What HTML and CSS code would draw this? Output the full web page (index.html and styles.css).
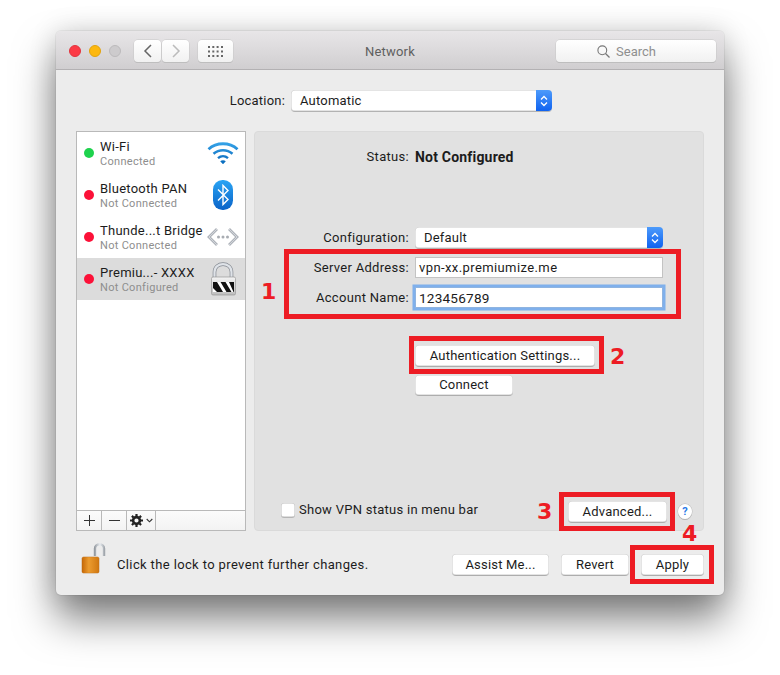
FILE: index.html
```html
<!DOCTYPE html>
<html lang="en">
<head>
<meta charset="utf-8">
<title>Network</title>
<link rel="stylesheet" href="styles.css">
</head>
<body>
<svg class="defs" width="0" height="0" aria-hidden="true">
  <defs>
    <linearGradient id="wifiGrad" gradientUnits="userSpaceOnUse" x1="0" y1="0" x2="0" y2="24"><stop offset="0" stop-color="#38a8ec"/><stop offset="1" stop-color="#0660b4"/></linearGradient>
    <linearGradient id="btGrad" x1="0" y1="0" x2="0" y2="1"><stop offset="0" stop-color="#2aa4f4"/><stop offset="1" stop-color="#0a63c8"/></linearGradient>
    <linearGradient id="silver" gradientUnits="userSpaceOnUse" x1="14" y1="0" x2="26" y2="0"><stop offset="0" stop-color="#8d939a"/><stop offset=".5" stop-color="#e8ecf0"/><stop offset="1" stop-color="#8a9097"/></linearGradient>
    <linearGradient id="body" x1="0" y1="0" x2="0" y2="1"><stop offset="0" stop-color="#f4f4f4"/><stop offset="1" stop-color="#bdbdbd"/></linearGradient>
    <linearGradient id="gold" x1="0" y1="0" x2="1" y2="0"><stop offset="0" stop-color="#c96a08"/><stop offset=".4" stop-color="#f3a334"/><stop offset="1" stop-color="#d47a12"/></linearGradient>
  </defs>
</svg>
<main class="window">
  <header class="titlebar">
    <div class="lights">
      <span class="light light-red"></span>
      <span class="light light-yellow"></span>
      <span class="light light-gray"></span>
    </div>
    <div class="navpair">
      <span class="tbtn nav">
        <svg width="10" height="14" viewBox="0 0 10 14"><path d="M8 1L2 7l6 6" fill="none" stroke="#666" stroke-width="1.5"/></svg>
      </span>
      <span class="tbtn nav">
        <svg width="10" height="14" viewBox="0 0 10 14"><path d="M2 1l6 6-6 6" fill="none" stroke="#bbb" stroke-width="1.5"/></svg>
      </span>
    </div>
    <span class="tbtn grid-btn">
      <svg width="15" height="11" viewBox="0 0 15 11" fill="#666">
        <rect x="0" y="0" width="2" height="2"/><rect x="4.3" y="0" width="2" height="2"/><rect x="8.6" y="0" width="2" height="2"/><rect x="13" y="0" width="2" height="2"/>
        <rect x="0" y="4.5" width="2" height="2"/><rect x="4.3" y="4.5" width="2" height="2"/><rect x="8.6" y="4.5" width="2" height="2"/><rect x="13" y="4.5" width="2" height="2"/>
        <rect x="0" y="9" width="2" height="2"/><rect x="4.3" y="9" width="2" height="2"/><rect x="8.6" y="9" width="2" height="2"/><rect x="13" y="9" width="2" height="2"/>
      </svg>
    </span>
    <h1 class="title">Network</h1>
    <span class="tbtn search">
      <svg width="13" height="13" viewBox="0 0 13 13"><circle cx="5.3" cy="5.3" r="4.4" fill="none" stroke="#777" stroke-width="1.1"/><path d="M8.5 8.5l4 4" stroke="#777" stroke-width="1.2"/></svg>
      <span>Search</span>
    </span>
  </header>

  <section class="content">
    <div class="location">
      <span class="label">Location:</span>
      <span class="select select-location">
        <span class="select-text">Automatic</span>
        <span class="stepper"><svg width="8" height="12" viewBox="0 0 8 12"><path d="M1 4.5L4 1.500l3 3M1 7.500l3 3 3-3" fill="none" stroke="#fff" stroke-width="1.3"/></svg></span>
      </span>
    </div>

    <div class="main">
      <aside class="sidebar">
        <ul class="services">
          <li class="service">
            <span class="dot dot-green"></span>
            <span class="service-text"><b>Wi-Fi</b><small>Connected</small></span>
            <svg class="service-icon" width="32" height="24" viewBox="0 0 32 24" fill="none" stroke="url(#wifiGrad)">
              <path d="M1.500 8.200C9.500 .9 22.500 .9 30.500 8.200" stroke-width="2.800"/>
              <path d="M6.500 12.800C12 8 20 8 25.500 12.800" stroke-width="2.600"/>
              <path d="M11 17.200C14 14.600 18 14.600 21 17.200" stroke-width="2.400"/>
              <path d="M13.200 20.200L16 23.200l2.800-3c-1.600-1.200-4-1.200-5.600 0z" fill="#0a6fc0" stroke="none"/>
            </svg>
          </li>
          <li class="service">
            <span class="dot dot-red"></span>
            <span class="service-text"><b>Bluetooth PAN</b><small>Not Connected</small></span>
            <svg class="service-icon" width="32" height="32" viewBox="0 0 32 32">
              <rect x="6" y="1" width="20" height="30" rx="9.500" fill="url(#btGrad)"/>
              <path d="M11 10.500l10 10-5 5V6.500l5 5-10 10" fill="none" stroke="#fff" stroke-width="1.400"/>
            </svg>
          </li>
          <li class="service">
            <span class="dot dot-red"></span>
            <span class="service-text"><b>Thunde...t Bridge</b><small>Not Connected</small></span>
            <svg class="service-icon" width="32" height="20" viewBox="0 0 32 20">
              <path d="M10 2L2 10l8 8M22 2l8 8-8 8" fill="none" stroke="#aeb3ba" stroke-width="2.800"/>
              <path d="M10 2L2 10l8 8M22 2l8 8-8 8" fill="none" stroke="#d2d5da" stroke-width="1"/>
              <circle cx="11.500" cy="10" r="1.500" fill="#a8acb2"/><circle cx="16" cy="10" r="1.500" fill="#a8acb2"/><circle cx="20.500" cy="10" r="1.500" fill="#a8acb2"/>
            </svg>
          </li>
          <li class="service service-selected">
            <span class="dot dot-red"></span>
            <span class="service-text"><b>Premiu...- XXXX</b><small>Not Configured</small></span>
            <svg class="service-icon" width="32" height="34" viewBox="0 0 32 34">
              <path d="M7.500 16V10C7.500 -.5 24.500 -.5 24.500 10v6" fill="none" stroke="#858a92" stroke-width="3.600"/>
              <path d="M7.500 16V10C7.500 -.5 24.500 -.5 24.500 10v6" fill="none" stroke="#dfe3e8" stroke-width="2.200"/>
              <rect x="4.500" y="15" width="24" height="18" rx="1.500" fill="url(#body)" stroke="#999" stroke-width=".7"/>
              <rect x="6" y="20" width="21" height="10" fill="#fff"/>
              <path d="M6 20h4l6 10h-6l-4-4zM13.500 20h5l6 10h-5zM22 20h5v10h-.5z" fill="#111"/>
            </svg>
          </li>
        </ul>
        <div class="toolbar">
          <span class="tool tool-add"><svg width="11" height="11" viewBox="0 0 11 11"><path d="M5.500 0v11M0 5.500h11" stroke="#333" stroke-width="1"/></svg></span>
          <span class="tool tool-add"><svg width="11" height="11" viewBox="0 0 11 11"><path d="M0 5.500h11" stroke="#333" stroke-width="1"/></svg></span>
          <span class="tool tool-gear">
            <svg width="13" height="13" viewBox="0 0 13 13"><circle cx="6.500" cy="6.500" r="3.400" fill="none" stroke="#222" stroke-width="2.600"/><path d="M6.500 0v13M0 6.500h13M1.900 1.900l9.200 9.200M11.100 1.900l-9.200 9.200" stroke="#222" stroke-width="2.200" stroke-dasharray="2.200 8.600 2.200"/></svg>
            <svg width="7" height="5" viewBox="0 0 7 5"><path d="M.7 1l2.800 2.800L6.300 1" fill="none" stroke="#333" stroke-width="1.100"/></svg>
          </span>
        </div>
      </aside>

      <section class="panel">
        <div class="status-row">
          <span class="form-label">Status:</span>
          <strong class="status-value">Not Configured</strong>
        </div>
        <div class="form">
          <span class="form-label">Configuration:</span>
          <span class="select">
            <span class="select-text">Default</span>
            <span class="stepper"><svg width="8" height="12" viewBox="0 0 8 12"><path d="M1 4.500L4 1.500l3 3M1 7.500l3 3 3-3" fill="none" stroke="#fff" stroke-width="1.300"/></svg></span>
          </span>
          <span class="form-label">Server Address:</span>
          <span class="field">vpn-xx.premiumize.me</span>
          <span class="form-label">Account Name:</span>
          <span class="field field-focus">123456789</span>
        </div>
        <div class="actions">
          <span class="btn btn-auth">Authentication Settings...</span>
          <span class="btn btn-connect">Connect</span>
        </div>
        <div class="panel-foot">
          <span class="check"></span>
          <span class="check-label">Show VPN status in menu bar</span>
          <span class="btn btn-advanced">Advanced...</span>
          <span class="help">?</span>
        </div>
      </section>
    </div>

    <footer class="footer">
      <svg class="padlock" width="26" height="32" viewBox="0 0 26 32">
        <path d="M15 14V6.500C15 1 24 1 24 6.500V14" fill="none" stroke="url(#silver)" stroke-width="2.400"/>
        <rect x="2" y="15" width="17" height="16" rx="1.500" fill="url(#gold)" stroke="#b86a10" stroke-width=".5"/>
        <path d="M2.500 17h16M2.500 19h16M2.500 21h16M2.500 23h16M2.500 25h16M2.500 27h16M2.500 29h16" stroke="#a85a06" stroke-opacity=".3" stroke-width=".6"/>
      </svg>
      <span class="lock-text">Click the lock to prevent further changes.</span>
      <span class="footer-buttons">
        <span class="btn btn-assist">Assist Me...</span>
        <span class="btn btn-revert">Revert</span>
        <span class="btn btn-apply">Apply</span>
      </span>
    </footer>
  </section>
</main>

<span class="mark mark-1"></span>
<span class="mark mark-2"></span>
<span class="mark mark-3"></span>
<span class="mark mark-4"></span>
<span class="num num-1">1</span>
<span class="num num-2">2</span>
<span class="num num-3">3</span>
<span class="num num-4">4</span>
</body>
</html>
```
FILE: styles.css
```css
* { box-sizing: border-box; }
html, body { margin: 0; padding: 0; background: #fff; }
body {
  width: 780px;
  height: 675px;
  overflow: hidden;
  position: relative;
  font-family: Roboto, "Liberation Sans", sans-serif;
  font-size: 13px;
  letter-spacing: .2px;
  color: #1c1c1c;
  padding: 31px 0 0 56px;
}
.defs { position: absolute; }

.window {
  width: 668px;
  height: 564px;
  background: #ececec;
  border-radius: 5px;
  box-shadow: 0 0 0 1px rgba(0,0,0,.05), 0 24px 40px rgba(0,0,0,.5), 0 0 28px rgba(0,0,0,.14);
  display: flex;
  flex-direction: column;
  overflow: hidden;
}

.titlebar {
  height: 39px;
  flex: none;
  display: flex;
  align-items: center;
  padding: 2px 8px 0 13px;
  background: linear-gradient(#e8e6e8, #d0ced0);
  border-bottom: 1px solid #b3b1b3;
  position: relative;
}
.lights { display: flex; gap: 8px; margin-right: 13px; }
.light { width: 12px; height: 12px; border-radius: 50%; }
.light-red { background: #fc3a46; border: 1px solid #e2343e; }
.light-yellow { background: #fdb80f; border: 1px solid #e2a30e; }
.light-gray { background: #cdcbcd; border: 1px solid #bcbabc; }

.tbtn {
  height: 22px;
  background: linear-gradient(#fff, #f1f1f1);
  border-radius: 4px;
  box-shadow: 0 0 0 .5px #c8c8c8, 0 1px 0 #b5b5b5;
  display: flex;
  align-items: center;
  justify-content: center;
}
.navpair { display: flex; gap: 1px; margin-right: 9px; }
.nav { width: 27px; }
.grid-btn { width: 35px; }
.title {
  position: absolute;
  left: 0;
  right: 0;
  top: 13px;
  margin: 0;
  text-align: center;
  font-weight: 400;
  font-size: 13px;
  color: #5f5f5f;
  pointer-events: none;
}
.search {
  width: 160px;
  margin-left: auto;
  padding-right: 19px;
  gap: 6px;
  color: #8f8f8f;
  font-size: 13px;
  letter-spacing: 0;
}

.content {
  flex: 1;
  padding: 0 20px;
  display: flex;
  flex-direction: column;
}

.location {
  display: flex;
  align-items: center;
  gap: 6px;
  padding: 20px 0 0 153px;
}
.label { width: 56px; text-align: right; white-space: nowrap; }

.select {
  height: 21px;
  background: #fff;
  border-radius: 4px;
  box-shadow: inset 0 0 0 .5px #c9c9c9, 0 1px 0 #b2b2b2;
  display: flex;
  align-items: center;
  justify-content: space-between;
  overflow: hidden;
}
.select-location { width: 261px; }
.select-text { padding-left: 9px; }
.stepper {
  width: 16px;
  height: 100%;
  background: linear-gradient(#4d9bfb, #0f62f0);
  display: flex;
  align-items: center;
  justify-content: center;
}

.main {
  margin-top: 20px;
  display: flex;
  gap: 8px;
  height: 400px;
}

.sidebar {
  width: 170px;
  background: #fff;
  border: 1px solid #b9b9b9;
  display: flex;
  flex-direction: column;
}
.services {
  flex: 1;
  margin: 0;
  padding: 0;
  list-style: none;
}
.service {
  height: 42px;
  display: flex;
  align-items: center;
  padding: 0 4px 0 7px;
  position: relative;
}
.service-selected { background: #dcdcdc; }
.dot { width: 10px; height: 10px; border-radius: 50%; flex: none; margin-right: 6px; }
.dot-green { background: #1ed24d; }
.dot-red { background: #fc1138; }
.service-text { display: flex; flex-direction: column; line-height: 15px; white-space: nowrap; padding-top: 1px; }
.service-text b { font-weight: 400; letter-spacing: .25px; }
.service-text small { font-size: 11px; color: #8e8e8e; letter-spacing: .3px; }
.service-icon { position: absolute; right: 6px; top: 50%; transform: translateY(-50%); }

.toolbar {
  height: 20px;
  flex: none;
  display: flex;
  background: linear-gradient(#fbfbfb, #f3f3f3);
  border-top: 1px solid #b9b9b9;
}
.tool {
  height: 100%;
  display: flex;
  align-items: center;
  justify-content: center;
  border-right: 1px solid #b9b9b9;
}
.tool-add { width: 25px; }
.tool-gear { width: 29px; gap: 3px; }

.panel {
  width: 450px;
  background: #e1e1e1;
  border: 1px solid #dadada;
  border-radius: 4px;
  display: flex;
  flex-direction: column;
  position: relative;
}
.status-row {
  display: grid;
  grid-template-columns: 154px auto;
  column-gap: 6px;
  padding-top: 17px;
  line-height: 16px;
}
.form-label { text-align: right; white-space: nowrap; letter-spacing: .3px; }
.status-value { font-weight: 700; font-size: 14px; letter-spacing: .2px; }

.form {
  margin-top: 62px;
  display: grid;
  grid-template-columns: 154px 248px;
  column-gap: 6px;
  row-gap: 9px;
  align-items: center;
}
.field {
  height: 21px;
  padding: 0 0 0 3px;
  background: #fff;
  border: 1px solid #c3c3c3;
  display: flex;
  align-items: center;
  letter-spacing: .4px;
}
.field-focus {
  border: 1px solid #8fb4e0;
  box-shadow: 0 0 0 2.500px #7fb0ec;
  font-size: 13.600px;
  letter-spacing: .2px;
}

.actions {
  margin: 37px 0 0 160px;
  display: flex;
  flex-direction: column;
  align-items: flex-start;
  gap: 9px;
}

.btn {
  height: 21px;
  display: inline-flex;
  align-items: center;
  justify-content: center;
  background: #fff;
  border-radius: 4px;
  box-shadow: inset 0 0 0 .5px #c9c9c9, 0 1px 0 #adadad;
  white-space: nowrap;
  flex: none;
}
.btn-auth { width: 180px; }
.btn-connect { width: 98px; height: 20px; padding-bottom: 1px; }

.panel-foot {
  position: absolute;
  left: 26px;
  right: 11px;
  bottom: 8px;
  display: flex;
  align-items: center;
}
.check {
  width: 14px;
  height: 14px;
  background: #fff;
  border-radius: 3px;
  box-shadow: inset 0 0 0 .5px #bdbdbd, 0 1px 0 #b5b5b5;
  margin: 0 4px 4px 0;
}
.check-label { margin-bottom: 4px; letter-spacing: .27px; }
.btn-advanced { width: 99px; margin-left: auto; }
.help {
  width: 14px;
  height: 15px;
  margin-left: 11px;
  border-radius: 50%;
  background: #fff;
  box-shadow: 0 0 0 .5px #bdbdbd, 0 1px 0 #adadad;
  color: #2a7be8;
  font-size: 11px;
  font-weight: 700;
  display: flex;
  align-items: center;
  justify-content: center;
}

.footer {
  flex: 1;
  display: flex;
  align-items: center;
  padding-top: 2px;
}
.padlock { margin: 0 11px 12px 4px; }
.lock-text { letter-spacing: .37px; }
.footer-buttons { margin-left: auto; display: flex; gap: 12px; }
.btn-assist { width: 97px; }
.btn-revert { width: 68px; }
.btn-apply { width: 63px; }

.mark {
  position: absolute;
  border: 5px solid #ed1c24;
}
.mark-1 { left: 284px; top: 249px; width: 397px; height: 70px; }
.mark-2 { left: 409px; top: 336px; width: 195px; height: 38px; }
.mark-3 { left: 559px; top: 492px; width: 116px; height: 39px; }
.mark-4 { left: 630px; top: 545px; width: 84px; height: 39px; }

.num {
  position: absolute;
  font-family: "DejaVu Sans", sans-serif;
  font-weight: 700;
  font-size: 22px;
  line-height: 22px;
  letter-spacing: 0;
  color: #ed1c24;
}
.num-1 { left: 261px; top: 281px; }
.num-2 { left: 610px; top: 346px; }
.num-3 { left: 537px; top: 501px; }
.num-4 { left: 682px; top: 523px; }
```
